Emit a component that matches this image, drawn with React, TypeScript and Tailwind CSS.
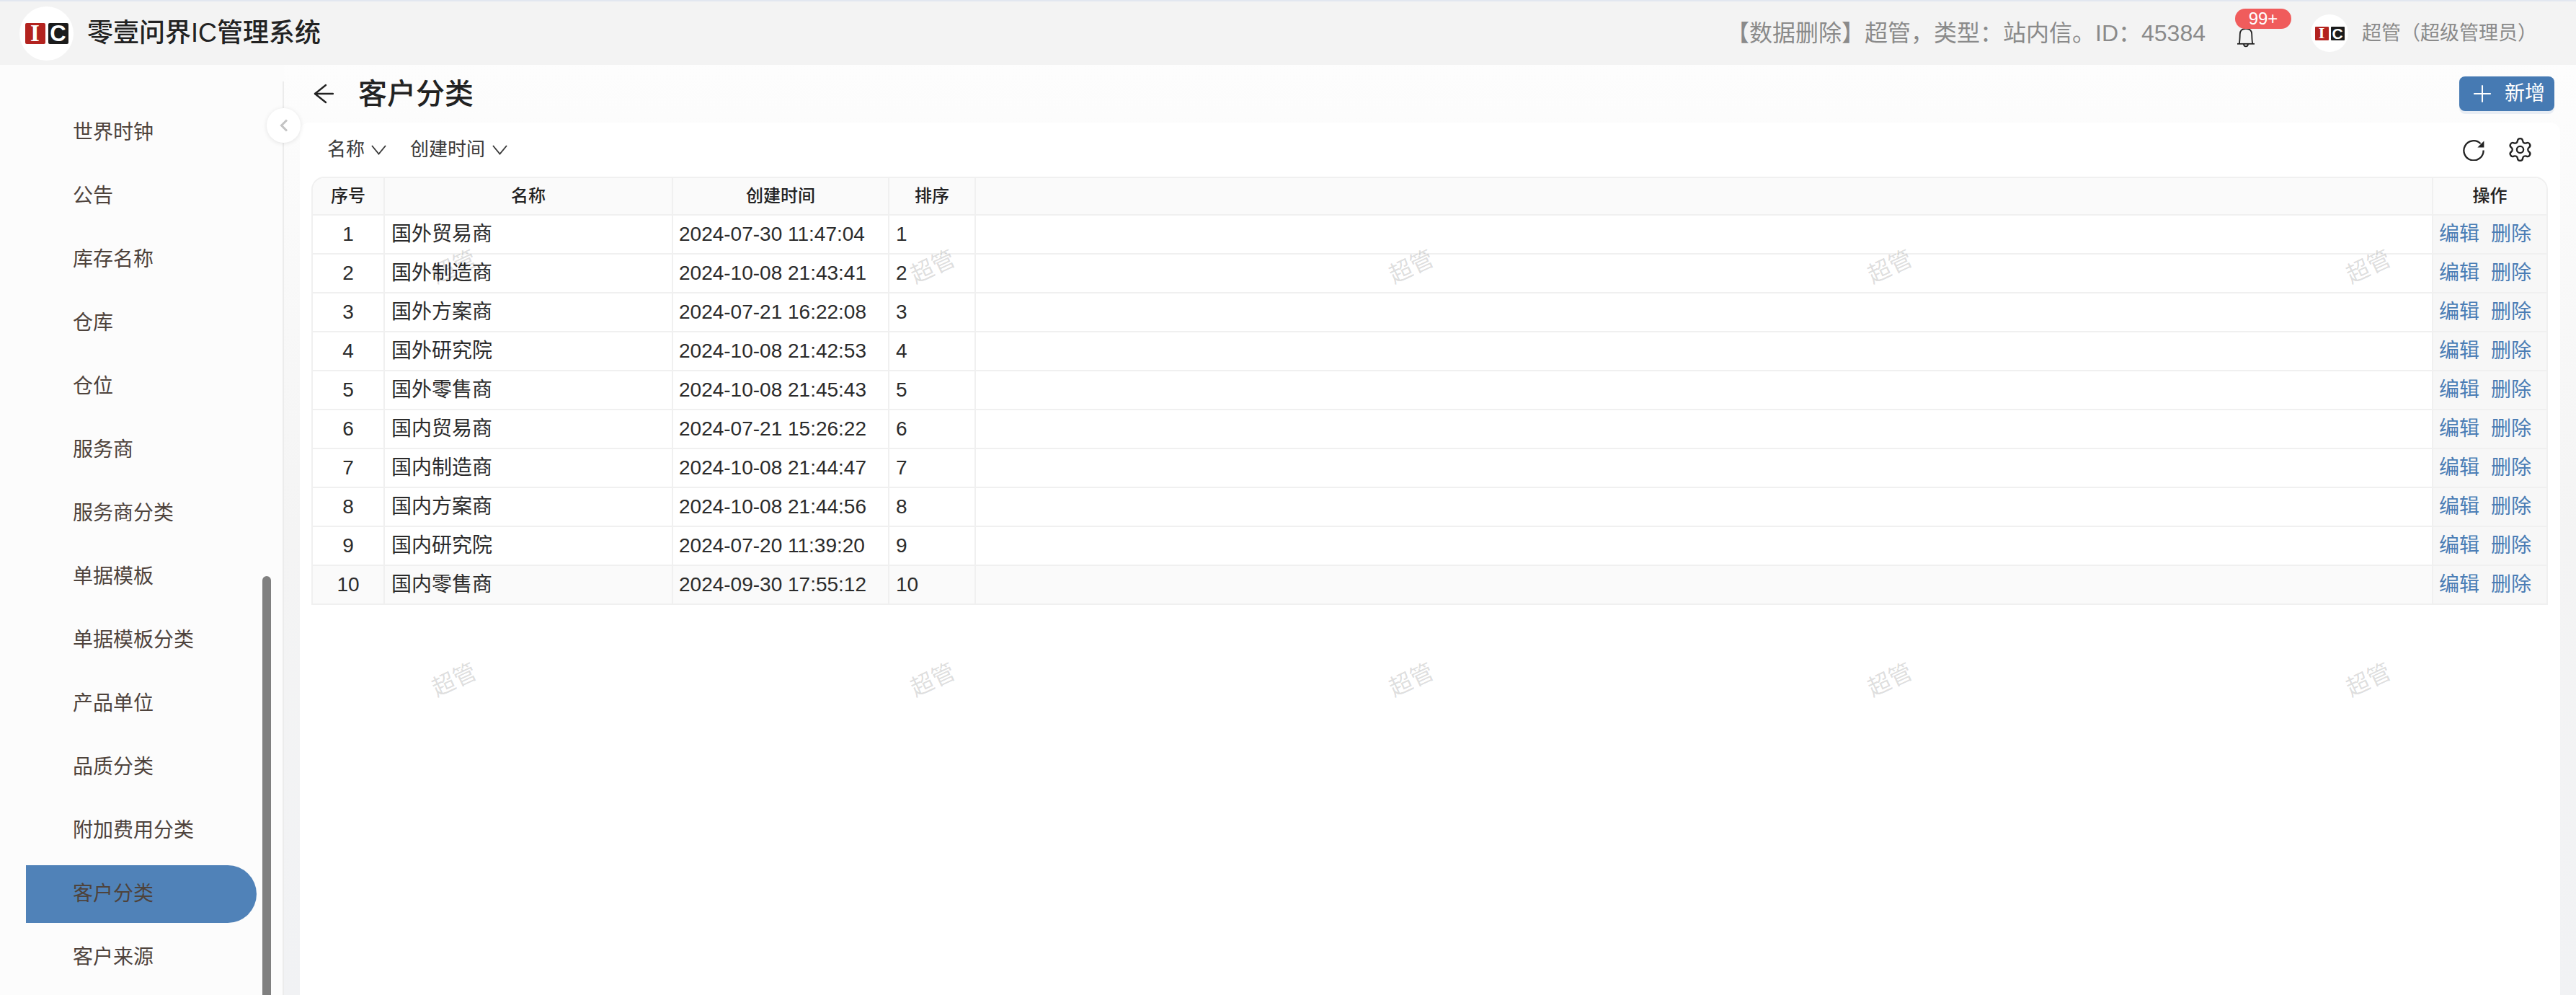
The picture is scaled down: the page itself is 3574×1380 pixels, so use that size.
import { Plus, Settings } from 'lucide-react'

const menuItems = [
  '世界时钟',
  '公告',
  '库存名称',
  '仓库',
  '仓位',
  '服务商',
  '服务商分类',
  '单据模板',
  '单据模板分类',
  '产品单位',
  '品质分类',
  '附加费用分类',
  '客户分类',
  '客户来源',
]

const rows = [
  { name: '国外贸易商', time: '2024-07-30 11:47:04' },
  { name: '国外制造商', time: '2024-10-08 21:43:41' },
  { name: '国外方案商', time: '2024-07-21 16:22:08' },
  { name: '国外研究院', time: '2024-10-08 21:42:53' },
  { name: '国外零售商', time: '2024-10-08 21:45:43' },
  { name: '国内贸易商', time: '2024-07-21 15:26:22' },
  { name: '国内制造商', time: '2024-10-08 21:44:47' },
  { name: '国内方案商', time: '2024-10-08 21:44:56' },
  { name: '国内研究院', time: '2024-07-20 11:39:20' },
  { name: '国内零售商', time: '2024-09-30 17:55:12' },
]

const gridCols = 'grid grid-cols-[100px_400px_300px_120px_minmax(0,1fr)_157px]'

function Logo({ small }: { small?: boolean }) {
  const box = small ? 'w-[19px] h-[19px] rounded-[1px]' : 'w-[28px] h-[29px] rounded-[2px]'
  return (
    <div className={`shrink-0 flex items-center justify-center rounded-full bg-white ${small ? 'w-[52px] h-[52px] gap-[3px]' : 'w-[75px] h-[75px] gap-[4px]'}`}>
      <span className={`${box} bg-[#b3231f] text-white font-bold leading-none flex items-center justify-center font-['Liberation_Serif',serif] ${small ? 'text-[22px]' : 'text-[33px]'}`}>I</span>
      <span className={`${box} bg-[#1b1b1b] text-white font-bold leading-none flex items-center justify-center font-['Liberation_Sans',sans-serif] ${small ? 'text-[21px]' : 'text-[31px]'}`}>C</span>
    </div>
  )
}

function BellIcon() {
  return (
    <svg width="24" height="27" viewBox="0 0 24 27" fill="none" stroke="#222" strokeWidth="1.8">
      <path d="M2.8 21.7 C3.6 17 3.6 12 3.8 8 C4 3 7 0.8 12 0.8 C17 0.8 20 3 20.2 8 C20.4 12 20.4 17 21.2 21.7" />
      <path d="M0 21.8 H24" />
      <path d="M9 22 C9 26.5 15 26.5 15 22" />
    </svg>
  )
}

function BackArrow() {
  return (
    <svg width="28" height="28" viewBox="0 0 28 28" fill="none" stroke="#222" strokeWidth="2.4" strokeLinecap="round" strokeLinejoin="round">
      <path d="M2 14 H27" />
      <path d="M17 2 L2 14 L17 26" />
    </svg>
  )
}

function VChevron() {
  return (
    <svg width="21" height="14" viewBox="0 0 21 14" fill="none" stroke="#3a3a3a" strokeWidth="1.9">
      <path d="M1 1 L10.5 12.5 L20 1" />
    </svg>
  )
}

function RefreshIcon() {
  return (
    <svg width="30" height="30" viewBox="0 0 30 30" fill="none" stroke="#222" strokeWidth="2.3">
      <path d="M24.6 6.2 A13.6 13.6 0 1 0 28.6 15.5" />
      <path d="M29.4 2.6 V11.6 H20.4 Z" fill="#222" stroke="none" />
    </svg>
  )
}

function Header() {
  return (
    <header className="h-[90px] shrink-0 bg-[#f3f3f3] border-t-2 border-[#e2e7f0] flex items-center pl-[27px] pr-[54px]">
      <Logo />
      <h1 className="ml-[19px] text-[36px] font-medium text-[#222]">零壹问界IC管理系统</h1>
      <div className="ml-auto flex items-center">
        <span className="text-[32px] text-[#8a8a8a] mr-[44px]">【数据删除】超管，类型：站内信。ID：45384</span>
        <div className="relative w-[24px] h-[27px] mr-[78px] mt-[13px]">
          <BellIcon />
          <span className="absolute -top-[27px] -left-[3px] w-[78px] h-[28px] rounded-full bg-[#f05c5c] text-white text-[24px] leading-[28px] text-center">99+</span>
        </div>
        <Logo small />
        <span className="ml-[19px] text-[27px] text-[#8a8a8a]">超管（超级管理员）</span>
      </div>
    </header>
  )
}

function Sidebar() {
  return (
    <aside className="relative w-[394px] shrink-0 overflow-hidden bg-[#fcfcfc] pt-[54px] pl-[36px]">
      <nav className="flex flex-col gap-[8px] w-[320px]">
        {menuItems.map((item) => (
          <div
            key={item}
            className={`h-[80px] shrink-0 pl-[65px] flex items-center text-[28px] text-[#4e433c] ${item === '客户分类' ? 'bg-[#5082b8] rounded-r-[40px]' : ''}`}
          >
            {item}
          </div>
        ))}
      </nav>
      <div className="absolute right-[18px] top-[709px] w-[12px] h-[700px] rounded-t-[6px] bg-[#808080]" />
      <div className="absolute right-0 top-[23px] bottom-0 w-[2px] bg-[#ececec]" />
    </aside>
  )
}

function Table() {
  return (
    <div className="border-2 border-b-0 border-[#f0f0f0] rounded-t-[18px] overflow-hidden">
      <div className={`${gridCols} h-[52px] bg-[#fafafa] text-[24px] font-medium text-[#222] text-center leading-[50px] border-b-2 border-[#f0f0f0]`}>
        <div className="border-r-2 border-[#f0f0f0]">序号</div>
        <div className="border-r-2 border-[#f0f0f0]">名称</div>
        <div className="border-r-2 border-[#f0f0f0]">创建时间</div>
        <div className="border-r-2 border-[#f0f0f0]">排序</div>
        <div className="border-r-2 border-[#f0f0f0]" />
        <div>操作</div>
      </div>
      {rows.map((row, index) => (
        <div
          key={row.name}
          className={`${gridCols} h-[54px] text-[28px] leading-[52px] text-[#2b2b2b] border-b-2 border-[#f0f0f0] ${index === 9 ? 'bg-[#fafafa]' : 'bg-white'}`}
        >
          <div className="border-r-2 border-[#f0f0f0] text-center">{index + 1}</div>
          <div className="border-r-2 border-[#f0f0f0] pl-[9px]">{row.name}</div>
          <div className="border-r-2 border-[#f0f0f0] pl-[8px]">{row.time}</div>
          <div className="border-r-2 border-[#f0f0f0] pl-[9px]">{index + 1}</div>
          <div className="border-r-2 border-[#f0f0f0]" />
          <div className="bg-[#f7f7f7] pl-[8px] flex gap-[16px] text-[#4a7db5]">
            <span>编辑</span>
            <span>删除</span>
          </div>
        </div>
      ))}
    </div>
  )
}

function Watermarks() {
  return (
    <div className="absolute left-[298px] top-[83px] grid grid-cols-[repeat(5,664px)] auto-rows-[573px] pointer-events-none">
      {Array.from({ length: 10 }).map((_, i) => (
        <div key={i} className="flex items-center justify-center">
          <span className="-rotate-[25deg] text-[32px] text-black/15">超管</span>
        </div>
      ))}
    </div>
  )
}

export default function App() {
  return (
    <div className="relative h-[1380px] overflow-hidden flex flex-col font-['Liberation_Sans','Noto_Sans_CJK_SC',sans-serif]">
      <Header />
      <div className="flex flex-1 min-h-0">
        <Sidebar />
        <main className="flex-1 min-w-0 flex flex-col bg-gradient-to-b from-[#fdfdfd] via-[#f4f4f4] via-50% to-[#f1f2f4] pr-[22px] pl-[22px]">
          <div className="h-[80px] shrink-0 flex items-center pl-[19px]">
            <BackArrow />
            <h2 className="ml-[34px] text-[40px] font-medium text-[#222]">客户分类</h2>
            <button className="ml-auto mr-[8px] w-[132px] h-[48px] rounded-[8px] bg-[#467ab3] shadow-[0_4px_0_#e8edf4] text-white text-[28px] flex items-center justify-center gap-[12px]">
              <Plus className="w-[38px] h-[38px]" strokeWidth={1.3} />
              新增
            </button>
          </div>
          <section className="flex-1 bg-white rounded-t-[14px] pl-[16px] pr-[17px]">
            <div className="h-[75px] flex items-center pl-[22px] text-[26px] text-[#3a3a3a]">
              <span>名称</span>
              <span className="ml-[9px]"><VChevron /></span>
              <span className="ml-[33px]">创建时间</span>
              <span className="ml-[10px]"><VChevron /></span>
              <div className="ml-auto flex items-center gap-[31px] pr-[20px] text-[#222]">
                <RefreshIcon />
                <Settings className="w-[37px] h-[37px]" strokeWidth={1.5} />
              </div>
            </div>
            <Table />
          </section>
        </main>
      </div>
      <div className="absolute left-[370px] top-[150px] w-[47px] h-[48px] rounded-full bg-white shadow-[0_1px_6px_rgba(0,0,0,0.1)] flex items-center justify-center">
        <svg width="12" height="18" viewBox="0 0 12 18" fill="none" stroke="#c4c4c4" strokeWidth="3">
          <path d="M10 1.5 L2.5 9 L10 16.5" />
        </svg>
      </div>
      <Watermarks />
    </div>
  )
}
